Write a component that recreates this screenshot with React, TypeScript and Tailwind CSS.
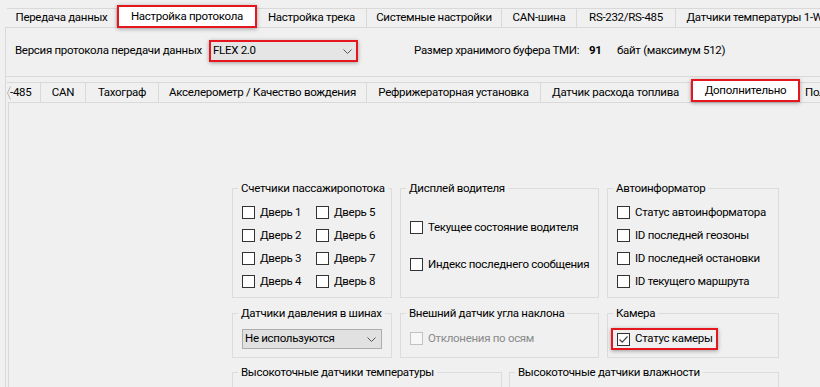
import React from "react";

const topTabs = [
  { label: "Передача данных", w: "w-[110px]" },
  { label: "Настройка протокола", w: "w-[140px]", active: true },
  { label: "Настройка трека", w: "w-[110px]" },
  { label: "Системные настройки", w: "w-[135px]" },
  { label: "CAN-шина", w: "w-[75px]" },
  { label: "RS-232/RS-485", w: "w-[99px]" },
  { label: "Датчики температуры 1-Wire", w: "w-[170px]" },
];

const subTabs = [
  { label: "-485", w: "w-[34px]" },
  { label: "CAN", w: "w-[45px]" },
  { label: "Тахограф", w: "w-[73px]" },
  { label: "Акселерометр / Качество вождения", w: "w-[208px]" },
  { label: "Рефрижераторная установка", w: "w-[174px]" },
  { label: "Датчик расхода топлива", w: "w-[150px]" },
  { label: "Дополнительно", w: "w-[109px]", active: true },
  { label: "Пользовательские", w: "w-[120px]", last: true },
];

const Chevron = () => (
  <svg width="9" height="5" viewBox="0 0 9 5" className="shrink-0">
    <path d="M0.5 0.5 L4.5 4.5 L8.5 0.5" fill="none" stroke="#555" strokeWidth="1" />
  </svg>
);

const Box = ({ checked, disabled }: { checked?: boolean; disabled?: boolean }) => (
  <span
    className={`w-[13px] h-[13px] shrink-0 border flex items-center justify-center ${
      disabled ? "border-[#c2c2c2] bg-[#f7f7f7]" : "border-[#333333] bg-white"
    }`}
  >
    {checked && (
      <svg width="11" height="11" viewBox="0 0 11 11">
        <path d="M1.5 5.5 L4.2 8.2 L9.5 2.5" fill="none" stroke="#444" strokeWidth="1.2" />
      </svg>
    )}
  </span>
);

const Check = ({ label, checked, disabled }: { label: string; checked?: boolean; disabled?: boolean }) => (
  <div className="flex items-center h-[23px] gap-[5px] whitespace-nowrap">
    <Box checked={checked} disabled={disabled} />
    <span className={disabled ? "text-[#8a8a8a]" : ""}>{label}</span>
  </div>
);

const Group = ({ title, className, children }: { title: string; className?: string; children?: React.ReactNode }) => (
  <fieldset className={`border border-[#dcdcdc] pl-[5px] pr-[5px] min-w-0 ${className ?? ""}`}>
    <legend className="px-[3px] leading-[14px] whitespace-nowrap">{title}</legend>
    <div className="pl-[4px]">{children}</div>
  </fieldset>
);

export default function App() {
  return (
    <div className="w-[820px] h-[387px] overflow-hidden bg-[#f0f0f0] text-[11.5px] tracking-[-0.3px] text-black font-['Roboto',sans-serif]">
      {/* верхние вкладки */}
      <div className="flex items-start h-[27px] pl-[7px] whitespace-nowrap">
        {topTabs.map((t) =>
          t.active ? (
            <div
              key={t.label}
              className={`${t.w} shrink-0 mt-[5px] h-[23px] relative z-10 bg-white border-2 border-[#e5161d] shadow-[0_1px_4px_rgba(0,0,0,0.35)] flex items-center justify-center`}
            >
              {t.label}
            </div>
          ) : (
            <div
              key={t.label}
              className={`${t.w} shrink-0 mt-[8px] h-[19px] border-t border-r border-[#d9d9d9] flex items-center justify-center`}
            >
              {t.label}
            </div>
          )
        )}
      </div>

      <div className="ml-[5px] border-l border-t border-[#d9d9d9] h-[400px]">
        {/* версия протокола */}
        <div className="flex items-center pl-[9px] pt-[12px] pb-[14px] border-b border-[#d9d9d9] whitespace-nowrap">
          <span className="w-[194px]">Версия протокола передачи данных</span>
          <div className="w-[149px] h-[22px] border-2 border-[#e5161d] bg-[#e5e5e5] shadow-[0_1px_4px_rgba(0,0,0,0.35)] flex items-center justify-between pl-[2px] pr-[4px]">
            <span>FLEX 2.0</span>
            <Chevron />
          </div>
          <span className="ml-[56px] w-[175px]">Размер хранимого буфера ТМИ:</span>
          <span className="w-[28px] font-bold">91</span>
          <span>байт (максимум 512)</span>
        </div>

        {/* вложенные вкладки */}
        <div className="flex items-start h-[25px] ml-[1px] whitespace-nowrap">
          {subTabs.map((t, i) =>
            t.active ? (
              <div
                key={t.label}
                className={`${t.w} shrink-0 mt-[2px] h-[23px] relative z-10 bg-white border-2 border-[#e5161d] shadow-[0_1px_4px_rgba(0,0,0,0.35)] flex items-center justify-center`}
              >
                {t.label}
              </div>
            ) : i === 0 ? (
              <div
                key={t.label}
                className={`${t.w} shrink-0 mt-[5px] h-[20px] border-t border-r border-[#d9d9d9] flex items-center`}
              >
                <svg width="4" height="14" viewBox="0 0 4 14" className="shrink-0">
                  <path d="M3.5 0.5 L0.5 7 L3.5 13.5" fill="none" stroke="#b5b5b5" strokeWidth="1" />
                </svg>
                <span className="-ml-[1px]">{t.label}</span>
              </div>
            ) : t.last ? (
              <div
                key={t.label}
                className={`${t.w} shrink-0 mt-[5px] h-[20px] border-t border-r border-[#d9d9d9] flex items-center pl-[5px]`}
              >
                {t.label}
              </div>
            ) : (
              <div
                key={t.label}
                className={`${t.w} shrink-0 mt-[5px] h-[20px] border-t border-r border-[#d9d9d9] flex items-center justify-center`}
              >
                {t.label}
              </div>
            )
          )}
        </div>

        <div className="ml-[2px] border-l border-t border-[#d9d9d9] pl-[223px] pt-[78px]">
          <div className="grid grid-cols-[160px_199px_172px] gap-x-[8px] h-[117px]">
            <Group title="Счетчики пассажиропотока">
              <div className="pt-[6px] grid grid-flow-col grid-rows-4 grid-cols-[74px_auto]">
                {[1, 2, 3, 4, 5, 6, 7, 8].map((n) => (
                  <Check key={n} label={`Дверь ${n}`} />
                ))}
              </div>
            </Group>
            <Group title="Дисплей водителя">
              <div className="pt-[21px] flex flex-col gap-[14px]">
                <Check label="Текущее состояние водителя" />
                <Check label="Индекс последнего сообщения" />
              </div>
            </Group>
            <Group title="Автоинформатор">
              <div className="pt-[6px] flex flex-col">
                <Check label="Статус автоинформатора" />
                <Check label="ID последней геозоны" />
                <Check label="ID последней остановки" />
                <Check label="ID текущего маршрута" />
              </div>
            </Group>
          </div>

          <div className="grid grid-cols-[160px_199px_172px] gap-x-[8px] h-[52px] mt-[8px]">
            <Group title="Датчики давления в шинах">
              <div className="pt-[9px]">
                <div className="w-[140px] h-[20px] border border-[#adadad] bg-[#e1e1e1] flex items-center justify-between pl-[2px] pr-[5px]">
                  <span>Не используются</span>
                  <Chevron />
                </div>
              </div>
            </Group>
            <Group title="Внешний датчик угла наклона">
              <div className="pt-[7px]">
                <Check label="Отклонения по осям" disabled />
              </div>
            </Group>
            <Group title="Камера">
              <div className="pt-[8px]">
                <div className="-ml-[6px] w-[107px] h-[22px] border-2 border-[#e5161d] shadow-[0_1px_4px_rgba(0,0,0,0.35)] pl-[4px] flex items-center gap-[5px] whitespace-nowrap">
                  <Box checked />
                  <span>Статус камеры</span>
                </div>
              </div>
            </Group>
          </div>

          <div className="grid grid-cols-[270px_270px] gap-x-[7px] h-[60px] mt-[7px]">
            <Group title="Высокоточные датчики температуры" />
            <Group title="Высокоточные датчики влажности" />
          </div>
        </div>
      </div>
    </div>
  );
}
